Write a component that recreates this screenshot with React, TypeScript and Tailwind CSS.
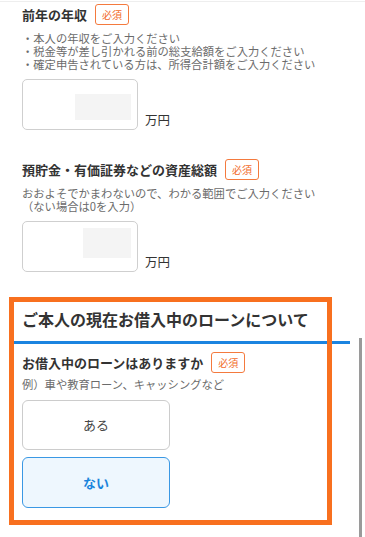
const font = {
  fontFamily: '"Noto Sans CJK JP", "Noto Sans", sans-serif',
};

function Badge() {
  return (
    <span className="flex h-[21px] w-[34px] items-center justify-center rounded-[3px] border border-[#f47a3e] bg-white text-[10px] leading-none text-[#f26b2a]">
      必須
    </span>
  );
}

function AmountInput({ inner }: { inner: string }) {
  return (
    <div className="mt-[8px] flex items-end">
      <div className="h-[51px] w-[116px] rounded-[5px] border border-[#cfcfcf] bg-white">
        <div className={inner}>
          <div className="h-full w-full bg-[#f4f4f4]"></div>
        </div>
      </div>
      <span className="mb-[2px] ml-[7px] text-[12.5px] leading-[16px] text-[#333]">
        万円
      </span>
    </div>
  );
}

export default function App() {
  return (
    <div
      className="relative h-[537px] w-[365px] overflow-hidden bg-white"
      style={font}
    >
      <div className="mt-px h-px bg-[#eeeeee]"></div>

      <div className="pl-[22px]">
        <div className="mt-[2px] flex h-[21px] items-center gap-2">
          <h2 className="text-[13px] font-bold text-[#333]">前年の年収</h2>
          <Badge />
        </div>
        <ul className="mt-[7px] text-[11.3px] leading-[13px] text-[#6b6b6b]">
          <li>・本人の年収をご入力ください</li>
          <li>・税金等が差し引かれる前の総支給額をご入力ください</li>
          <li>・確定申告されている方は、所得合計額をご入力ください</li>
        </ul>
        <div className="mt-[1px]">
          <AmountInput inner="ml-[52px] mt-[14px] h-[26px] w-[56px]" />
        </div>

        <div className="mt-[29px] flex h-[21px] items-center gap-2">
          <h2 className="text-[13px] font-bold text-[#333]">
            預貯金・有価証券などの資産総額
          </h2>
          <Badge />
        </div>
        <p className="mt-[7px] text-[11.3px] leading-[13px] text-[#6b6b6b]">
          おおよそでかまわないので、わかる範囲でご入力ください
          <br />
          （ない場合は0を入力）
        </p>
        <AmountInput inner="ml-[60px] mt-[6px] h-[30px] w-[48px]" />
      </div>

      <section className="ml-[14px] mt-[25px] w-[336px]">
        <h2 className="border-b-[3px] border-[#1b84e0] pb-[10px] pl-[8px] pt-[10px] text-[16px] font-bold leading-[24px] text-[#333]">
          ご本人の現在お借入中のローンについて
        </h2>
        <div className="pl-[8px]">
          <div className="mt-[8px] flex h-[21px] items-center gap-2">
            <h3 className="text-[13px] font-bold text-[#333]">
              お借入中のローンはありますか
            </h3>
            <Badge />
          </div>
          <p className="mt-[5px] text-[11.3px] leading-[13px] text-[#6b6b6b]">
            例）車や教育ローン、キャッシングなど
          </p>
          <div className="mt-[9px] flex flex-col gap-[7px]">
            <button className="flex h-[50px] w-[148px] items-center justify-center rounded-[6px] border border-[#cccccc] bg-white text-[13px] text-[#444]">
              ある
            </button>
            <button className="flex h-[51px] w-[148px] items-center justify-center rounded-[6px] border border-[#3a98e4] bg-[#eef7fe] text-[13px] font-bold text-[#1a84dc]">
              ない
            </button>
          </div>
        </div>
      </section>

      <div className="absolute left-[9px] top-[297px] h-[228px] w-[323px] border-[5px] border-[#f8701f]"></div>
      <div className="absolute left-[359px] top-[338px] h-[199px] w-[3px] bg-[#9a9a9a]"></div>
    </div>
  );
}
